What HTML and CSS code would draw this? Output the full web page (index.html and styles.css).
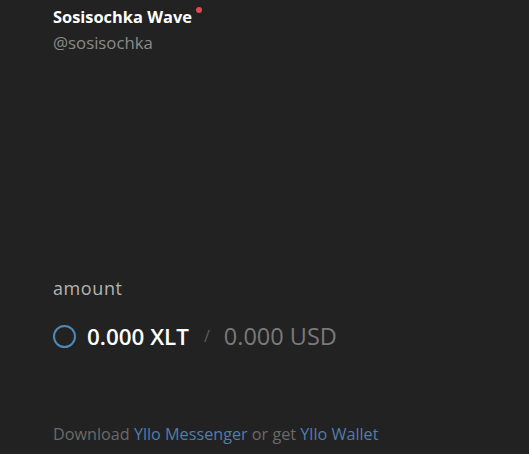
FILE: index.html
```html
<!DOCTYPE html>
<html>
<head>
<meta charset="utf-8">
<link rel="stylesheet" href="styles.css">
</head>
<body>
<div class="page">
  <div class="user">
    <div class="name">Sosisochka Wave<span class="dot"></span></div>
    <div class="handle">@sosisochka</div>
  </div>
  <div class="amount-block">
    <div class="label">amount</div>
    <div class="value-row">
      <span class="ring"></span>
      <span class="xlt">0.000 XLT</span>
      <span class="sep">/</span>
      <span class="usd">0.000 USD</span>
    </div>
  </div>
  <div class="footer">Download <a class="link">Yllo Messenger</a> or get <a class="link">Yllo Wallet</a></div>
</div>
</body>
</html>
```
FILE: styles.css
```css
html, body {
  margin: 0;
  padding: 0;
  background: #222222;
  height: 100%;
}
.page {
  height: 454px;
  padding: 0 0 0 53px;
  box-sizing: border-box;
  display: flex;
  flex-direction: column;
  font-family: "Open Sans", "Noto Sans", sans-serif;
}
.user {
  padding-top: 5px;
}
.name {
  color: #ffffff;
  font-weight: 700;
  font-size: 16.4px;
  line-height: 24px;
  position: relative;
  display: inline-block;
}
.dot {
  position: absolute;
  right: -10px;
  top: 2px;
  width: 6px;
  height: 6px;
  border-radius: 50%;
  background: #e0494f;
}
.handle {
  color: #8a8a8a;
  font-size: 16.8px;
  line-height: 22px;
  margin-top: 3px;
}
.amount-block {
  margin-top: 222px;
}
.label {
  color: #b4b4b4;
  font-size: 18px;
  line-height: 24px;
  letter-spacing: 0.6px;
}
.value-row {
  display: flex;
  align-items: center;
  margin-top: 23px;
  height: 26px;
}
.ring {
  width: 19px;
  height: 19px;
  border: 2px solid #4d8ab8;
  border-radius: 50%;
  margin-right: 11px;
}
.xlt {
  color: #ffffff;
  font-size: 22.4px;
  font-weight: 600;
}
.sep {
  color: #5e5e5e;
  font-size: 16px;
  margin: 0 14px 0 15px;
}
.usd {
  color: #7a7a7a;
  font-size: 23.5px;
}
.footer {
  margin-top: auto;
  margin-bottom: 10px;
  color: #6a6a6a;
  font-size: 16.2px;
  line-height: 20px;
}
.link {
  color: #4f7eaa;
}
```
